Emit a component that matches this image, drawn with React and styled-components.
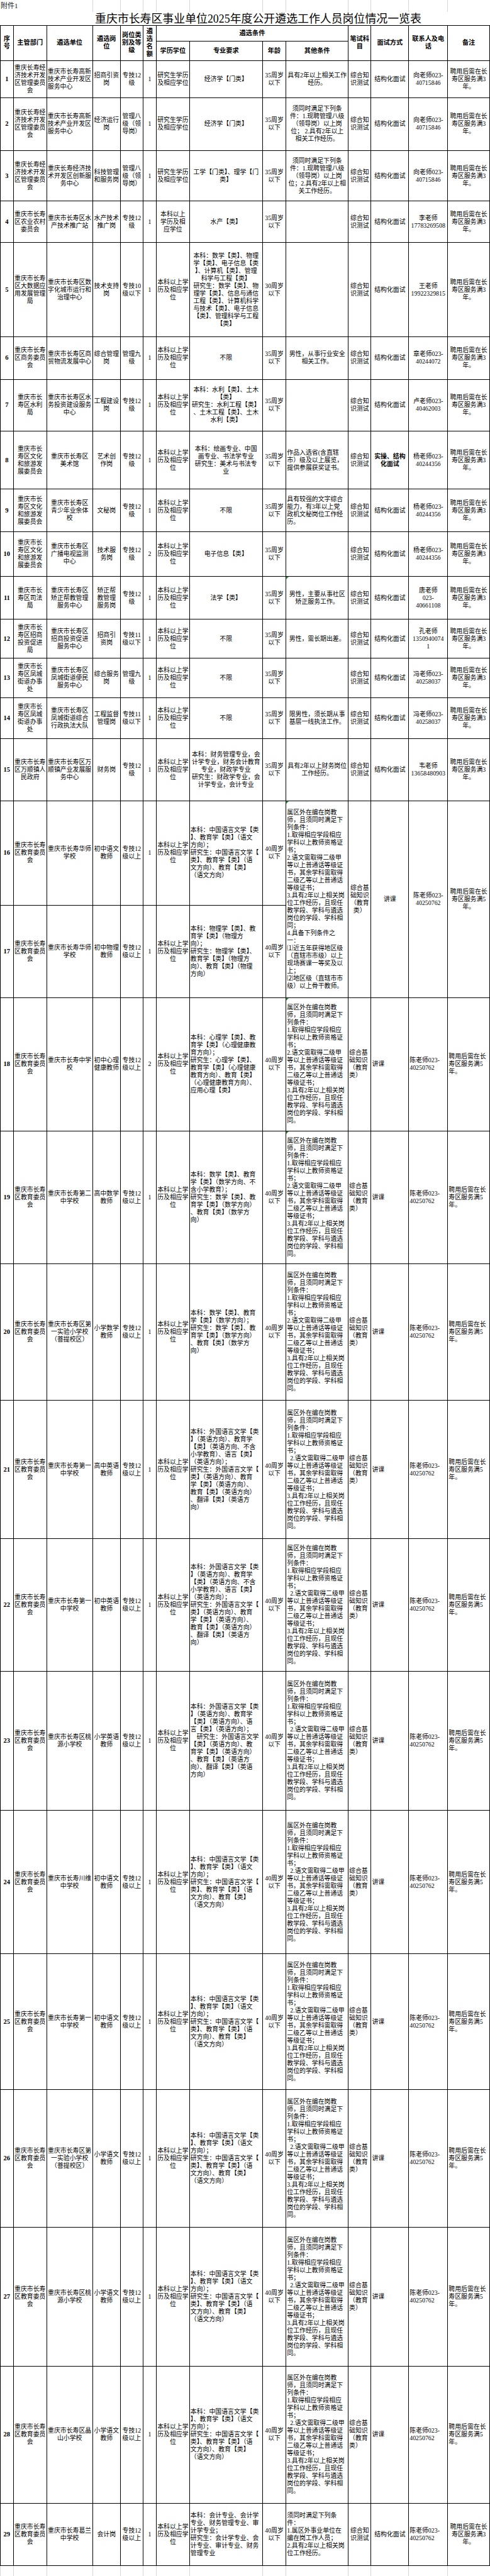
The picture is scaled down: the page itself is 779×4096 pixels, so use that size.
import React from 'react'
import styled, { createGlobalStyle, css } from 'styled-components'

const S = 0.617
// column widths measured on the full-size sheet, then scaled
const COLS = [33.5, 86, 118, 72, 58, 34.4, 85.6, 188, 61, 160, 59, 97, 100.7, 108].map(w => +(w * S).toFixed(1))

const GlobalStyle = createGlobalStyle`
  html, body { margin: 0; padding: 0; background: #fff; }
  body {
    font-family: "Liberation Serif", "Noto Sans CJK SC", serif;
    color: #000;
  }
`

const Page = styled.div`
  width: 779px;
`

const GridStrip = styled.div`
  display: flex;
  height: ${p => p.$h}px;
`

const GridCell = styled.div`
  flex: 0 0 ${p => p.$w}px;
  box-sizing: border-box;
  border-left: ${p => (p.$line ? '1px solid #d6d6d6' : 'none')};
  font-size: 11px;
  line-height: ${p => p.$h}px;
  padding-left: 1px;
  white-space: nowrap;
  color: #222;
`

const TitleBar = styled.div`
  height: 21px;
  padding-left: 151px;
  font-size: 17.9px;
  line-height: 23px;
  white-space: nowrap;
`

const Table = styled.table`
  border-collapse: collapse;
  table-layout: fixed;
  width: ${COLS.reduce((a, b) => a + b, 0)}px;
`

const Col = styled.col`
  width: ${p => p.$w}px;
`

const Row = styled.tr`
  height: ${p => p.$h}px;
`

const Th = styled.th`
  border: 1px solid #000;
  padding: 0 1px;
  font-size: 10.2px;
  line-height: 12px;
  font-weight: 700;
  text-align: center;
  vertical-align: middle;
  white-space: pre-wrap;
`

const Cell = styled.td`
  border: 1px solid #000;
  padding: 0 1px;
  font-size: 9.9px;
  line-height: 12px;
  font-weight: ${p => (p.$bold ? 700 : 400)};
  text-align: ${p => (p.$left ? 'left' : 'center')};
  vertical-align: middle;
  white-space: pre-wrap;
  position: relative;
  overflow: hidden;
  ${p => p.$flag && css`
    &::before {
      content: '';
      position: absolute;
      left: 0;
      top: 0;
      border-top: 4px solid #1e9a3c;
      border-right: 4px solid transparent;
    }
  `}
`

const NumCell = styled(Cell)`
  font-weight: 700;
  font-size: 10.5px;
`

const EDU_R = '研究生学历\n及相应学位'
const EDU_B = '本科以上学\n历及相应学\n位'
const ZK = '综合知\n识测试'
const JG = '结构化面试'
const KFQ = '重庆长寿经\n济技术开发\n区管理委员\n会'
const WL = '重庆市长\n寿区文化\n和旅游发\n展委员会'
const FC = '重庆市长\n寿区凤城\n街道办事\n处'
const ED = '重庆市长寿\n区教育委员\n会'
const G12 = '专技12\n级'
const G12UP = '专技12\n级以上'
const A35 = '35周岁\n以下'
const A40 = '40周岁\n以下'
const XIANG = '向老师023-\n40715846'
const YANG = '杨老师023-\n40244356'
const FENG = '冯老师023-\n40258037'
const CHEN = '陈老师023-\n40250762'
const JY = '综合基\n础知识\n（教育\n类）'
const R3 = '聘用后需在长\n寿区服务满3\n年。'
const R5 = '聘用后需在长\n寿区服务满5\n年。'

const YW = '本科：中国语言文学【类\n】、教育学【类】（语文\n方向）；\n研究生：中国语言文学【\n类】、教育学【类】（语\n文方向）、教育【类】\n（语文方向）'
const EN1 = '本科：外国语言文学【类\n】（英语方向）、教育学\n【类】（英语方向、不含\n小学教育）、语言【类】\n（英语方向）；\n研究生：外国语言文学【\n类】（英语方向）、教育\n学【类】（英语方向）、\n教育【类】（英语方向）\n、翻译【类】（英语方\n向）'
const EN2 = '本科：外国语言文学【类\n】（英语方向）、教育学\n【类】（英语方向）、语\n言【类】（英语方向）；\n\u3000研究生：外国语言文学\n【类】（英语方向）、教\n育学【类】（英语方向）\n、教育【类】（英语方\n向）、翻译【类】（英语\n方向）'

const teacherOther = indent =>
  '属区外在编在岗教\n师，且须同时满足下\n列条件：\n1.取得相应学段相应\n学科以上教师资格证\n书；\n' +
  (indent ? '\u00a0\u00a0' : '') +
  '2.语文需取得二级甲\n等以上普通话等级证\n书，其余学科需取得\n二级乙等以上普通话\n等级证书；\n3.具有2年以上相关岗\n位工作经历，且现任\n教学段、学科与遴选\n岗位的学段、学科相\n同。'

const MERGED_OTHER =
  '属区外在编在岗教\n师，且须同时满足下\n列条件：\n1.取得相应学段相应\n学科以上教师资格证\n书；\n2.语文需取得二级甲\n等以上普通话等级证\n书，其余学科需取得\n二级乙等以上普通话\n等级证书；\n3.具有2年以上相关岗\n位工作经历，且现任\n教学段、学科与遴选\n岗位的学段、学科相\n同；\n4.具备下列条件之\n一：\n⑴近五年获得地区级\n（直辖市市级）以上\n现场赛课一等奖及以\n上；\n⑵地区级（直辖市市\n级）以上骨干教师。'

const rows = [
  { h: 96, dept: KFQ, unit: '重庆市长寿高新\n技术产业开发区\n服务中心', unitLeft: true, post: '招商引资\n岗', grade: G12, num: 1, edu: EDU_R, major: '经济学【门类】', age: A35, other: '具有2年以上相关工作\n经历。', contact: XIANG, remark: R3 },
  { h: 136, dept: KFQ, unit: '重庆市长寿高新\n技术产业开发区\n服务中心', unitLeft: true, post: '经济运行\n岗', grade: '管理八\n级（领\n导岗）', num: 1, edu: EDU_R, major: '经济学【门类】', age: A35, other: '须同时满足下列条\n件：1.现聘管理八级\n（领导岗）以上岗\n位； 2.具有2年以上\n相关工作经历。', contact: XIANG, remark: R3 },
  { h: 131, dept: KFQ, unit: '重庆长寿经济技\n术开发区创新服\n务中心', post: '科技管理\n和服务岗', grade: '管理八\n级（领\n导岗）', num: 1, edu: EDU_R, major: '工学【门类】、理学【门\n类】', age: A35, other: '须同时满足下列条\n件：1.现聘管理八级\n（领导岗）以上岗\n位；2.具有2年以上相\n关工作经历。', contact: XIANG, remark: R3 },
  { h: 107, dept: '重庆市长寿\n区农业农村\n委员会', unit: '重庆市长寿区水\n产技术推广站', post: '水产技术\n推广岗', grade: G12, num: 1, edu: '本科以上\n学历及相\n应学位', major: '水产【类】', age: A35, other: '', contact: '李老师\n17783269508', remark: R3 },
  { h: 242, dept: '重庆市长寿\n区大数据应\n用发展管理\n局', unit: '重庆市长寿区数\n字化城市运行和\n治理中心', post: '技术支持\n岗', grade: '专技10\n级以下', num: 1, edu: EDU_B, major: '本科：数学【类】、物理\n学【类】、电子信息【类\n】、计算机【类】、管理\n科学与工程【类】\n研究生：数学【类】、物\n理学【类】、信息与通信\n工程【类】、计算机科学\n与技术【类】、电子信息\n【类】、管理科学与工程\n【类】', age: '30周岁\n以下', other: '', contact: '王老师\n19922329815', remark: R3 },
  { h: 110, dept: '重庆市长寿\n区商务委员\n会', unit: '重庆市长寿区商\n贸物流发展中心', post: '综合管理\n岗', grade: '管理九\n级', num: 1, edu: EDU_B, major: '不限', age: A35, other: '男性，从事行业安全\n相关工作。', contact: '章老师023-\n40244072', remark: R3 },
  { h: 134, dept: '重庆市长\n寿区水利\n局', unit: '重庆市长寿区水\n务投资建设服务\n中心', post: '工程建设\n岗', grade: G12, num: 1, edu: EDU_B, major: '本科：水利【类】、土木\n【类】\n研究生：水利工程【类】\n、土木工程【类】、土木\n水利【类】', age: A35, other: '', contact: '卢老师023-\n40462003', remark: R3 },
  { h: 149, dept: WL, unit: '重庆市长寿区\n美术馆', post: '艺术创\n作岗', grade: G12, num: 1, edu: EDU_B, major: '本科：绘画专业、中国\n画专业、书法学专业\n研究生：美术与书法专\n业', age: A35, other: '作品入选省(含直辖\n市）级及以上展览，\n提供参展获奖证书。', otherLeft: true, interview: '实操、结构\n化面试', bold: true, contact: YANG, remark: R3 },
  { h: 110, dept: WL, unit: '重庆市长寿区\n青少年业余体\n校', post: '文秘岗', grade: G12, num: 1, edu: EDU_B, major: '不限', age: A35, other: '具有较强的文字综合\n能力，有3年以上党\n政机文秘岗位工作经\n历。', otherLeft: true, contact: YANG, remark: R3 },
  { h: 115, dept: WL, unit: '重庆市长寿区\n广播电视监测\n中心', post: '技术服\n务岗', grade: G12, num: 2, edu: EDU_B, major: '电子信息【类】', age: A35, other: '', contact: YANG, remark: R3 },
  { h: 110, dept: '重庆市长\n寿区司法\n局', unit: '重庆市长寿区\n矫正帮教管理\n服务中心', post: '矫正帮\n教管理\n服务岗', grade: G12, num: 1, edu: EDU_B, major: '法学【类】', age: A35, other: '男性，主要从事社区\n矫正服务工作。', flag: true, contact: '唐老师\n023-\n40661108', remark: R3 },
  { h: 101, dept: '重庆市长\n寿区招商\n投资促进\n局', unit: '重庆市长寿区\n招商投资促进\n服务中心', post: '招商引\n资岗', grade: '专技11\n级以下', num: 1, edu: EDU_B, major: '不限', age: A35, other: '男性，需长期出差。', contact: '孔老师\n1350940074\n1', remark: R3 },
  { h: 101, dept: FC, unit: '重庆市长寿区\n凤城街道便民\n服务中心', post: '综合服务\n岗', grade: '管理九\n级', num: 1, edu: EDU_B, major: '不限', age: A35, other: '', contact: FENG, remark: R3 },
  { h: 106, dept: FC, unit: '重庆市长寿区\n凤城街道综合\n行政执法大队', post: '工程监督\n管理岗', grade: '专技11\n级以下', num: 1, edu: EDU_B, major: '不限', age: A35, other: '限男性，须长期从事\n基层一线执法工作。', contact: FENG, remark: R3 },
  { h: 160, dept: '重庆市长寿\n区万顺镇人\n民政府', unit: '重庆市长寿区万\n顺镇产业发展服\n务中心', post: '财务岗', grade: G12, num: 1, edu: EDU_B, major: '本科：财务管理专业，会\n计学专业，财务会计教育\n专业，财政学专业\n研究生：财政学专业，会\n计学专业，会计专业', age: A35, other: '具有2年以上财务岗位\n工作经历。', contact: '韦老师\n13658480903', remark: R3 },
  { h: 270, merge: 'start', dept: ED, unit: '重庆市长寿华师\n学校', post: '初中语文\n教师', grade: G12UP, num: 1, edu: EDU_B, major: YW, majorLeft: true, age: A40, other: MERGED_OTHER, otherLeft: true, flag: true, exam: JY, interview: '讲课', contact: CHEN, remark: R5 },
  { h: 238, merge: 'skip', dept: ED, unit: '重庆市长寿华师\n学校', post: '初中物理\n教师', grade: G12UP, num: 1, edu: EDU_B, major: '本科：物理学【类】、教\n育学【类】（物理方\n向）；\n研究生：物理学【类】、\n教育学【类】（物理方\n向）、教育【类】（物理\n方向）', majorLeft: true, age: A40 },
  { h: 343, teach: true, flag: true, dept: ED, unit: '重庆市长寿中学\n校', post: '初中心理\n健康教师', grade: G12UP, num: 2, edu: EDU_B, major: '本科：心理学【类】、教\n育学【类】（心理健康教\n育方向）；\n研究生：心理学【类】、\n教育学【类】（心理健康\n教育方向）、教育【类】\n（心理健康教育方向）、\n应用心理【类】', other: teacherOther(false) },
  { h: 343, teach: true, flag: true, dept: ED, unit: '重庆市长寿第二\n中学校', post: '高中数学\n教师', grade: G12UP, num: 1, edu: EDU_B, major: '本科：数学【类】、教育\n学【类】（数学方向、不\n含小学教育）；\n研究生：数学【类】、教\n育学【类】（数学方向）\n、教育【类】（数学方\n向）', other: teacherOther(false) },
  { h: 352, teach: true, dept: ED, unit: '重庆市长寿区第\n一实验小学校\n（菩提校区）', post: '小学数学\n教师', grade: G12UP, num: 1, edu: EDU_B, major: '本科：数学【类】、教育\n学【类】（数学方向）；\n研究生：数学【类】、教\n育学【类】（数学方向）\n、教育【类】（数学方\n向）', other: teacherOther(false) },
  { h: 356, teach: true, dept: ED, unit: '重庆市长寿第一\n中学校', post: '高中英语\n教师', grade: G12UP, num: 1, edu: EDU_B, major: EN1, other: teacherOther(true) },
  { h: 342, teach: true, dept: ED, unit: '重庆市长寿第一\n中学校', post: '初中英语\n教师', grade: G12UP, num: 1, edu: EDU_B, major: EN1, other: teacherOther(true) },
  { h: 358, teach: true, dept: ED, unit: '重庆市长寿区桃\n源小学校', post: '小学英语\n教师', grade: G12UP, num: 1, edu: EDU_B, major: EN2, other: teacherOther(true) },
  { h: 370, teach: true, dept: ED, unit: '重庆市长寿川维\n中学校', post: '初中语文\n教师', grade: G12UP, num: 1, edu: EDU_B, major: YW, other: teacherOther(true) },
  { h: 350, teach: true, dept: ED, unit: '重庆市长寿第一\n中学校', post: '初中语文\n教师', grade: G12UP, num: 1, edu: EDU_B, major: YW, other: teacherOther(true) },
  { h: 355, teach: true, dept: ED, unit: '重庆市长寿区第\n一实验小学校\n（菩提校区）', post: '小学语文\n教师', grade: G12UP, num: 1, edu: EDU_B, major: YW, other: teacherOther(true) },
  { h: 358, teach: true, dept: ED, unit: '重庆市长寿区桃\n源小学校', post: '小学语文\n教师', grade: G12UP, num: 1, edu: EDU_B, major: YW, other: teacherOther(true) },
  { h: 353, teach: true, dept: ED, unit: '重庆市长寿区晶\n山小学校', post: '小学语文\n教师', grade: G12UP, num: 1, edu: EDU_B, major: YW, other: teacherOther(true) },
  { h: 161, dept: ED, unit: '重庆市长寿葛兰\n中学校', post: '会计岗', grade: G12UP, num: 1, edu: EDU_B, major: '本科：会计专业、会计学\n专业、财务管理专业、审\n计学专业；\n研究生：会计学专业、会\n计专业、审计专业、财务\n管理专业', majorLeft: true, age: A40, other: '须同时满足下列条\n件：\n1.属区外事业单位在\n编在岗工作人员；\n2.具有2年以上相关岗\n位工作经历。', otherLeft: true, contactLeft: true, remark: R3 },
]

function BodyRow({ r, n }) {
  const t = r.teach
  const span = r.merge === 'start' ? 2 : 1
  return (
    <Row $h={+(r.h * S).toFixed(1)}>
      <NumCell>{n}</NumCell>
      <Cell>{r.dept}</Cell>
      <Cell $left={r.unitLeft}>{r.unit}</Cell>
      <Cell>{r.post}</Cell>
      <Cell>{r.grade}</Cell>
      <Cell>{r.num}</Cell>
      <Cell>{r.edu}</Cell>
      <Cell $left={t || r.majorLeft}>{r.major}</Cell>
      <Cell>{r.age || A40}</Cell>
      {r.merge !== 'skip' && (
        <>
          <Cell $left={t || r.otherLeft} $flag={r.flag} rowSpan={span}>{r.other}</Cell>
          <Cell $left={t} rowSpan={span}>{r.exam || (t ? JY : ZK)}</Cell>
          <Cell $left={t} $bold={r.bold} rowSpan={span}>{r.interview || (t ? '讲课' : JG)}</Cell>
          <Cell $left={t || r.contactLeft} rowSpan={span}>{r.contact || CHEN}</Cell>
          <Cell $left={t} rowSpan={span}>{r.remark || R5}</Cell>
        </>
      )}
    </Row>
  )
}

export default function App() {
  const stripCols = [COLS[0] + COLS[1] + COLS[2], ...COLS.slice(3)]
  return (
    <Page>
      <GlobalStyle />
      <GridStrip $h={19}>
        {stripCols.map((w, i) => (
          <GridCell key={i} $w={w} $h={19} $line={i > 0}>{i === 0 ? '附件1' : ''}</GridCell>
        ))}
      </GridStrip>
      <TitleBar>重庆市长寿区事业单位2025年度公开遴选工作人员岗位情况一览表</TitleBar>
      <Table>
        <colgroup>
          {COLS.map((w, i) => <Col key={i} $w={w} />)}
        </colgroup>
        <thead>
          <Row $h={24.7}>
            <Th rowSpan={2}>{'序\n号'}</Th>
            <Th rowSpan={2}>主管部门</Th>
            <Th rowSpan={2}>遴选单位</Th>
            <Th rowSpan={2}>{'遴选岗\n位'}</Th>
            <Th rowSpan={2}>{'岗位类\n别及等\n级'}</Th>
            <Th rowSpan={2}>{'遴\n选\n名\n额'}</Th>
            <Th colSpan={4}>遴选条件</Th>
            <Th rowSpan={2}>{'笔试科\n目'}</Th>
            <Th rowSpan={2}>面试方式</Th>
            <Th rowSpan={2}>{'联系人及电\n话'}</Th>
            <Th rowSpan={2}>备注</Th>
          </Row>
          <Row $h={30.9}>
            <Th>学历学位</Th>
            <Th>专业要求</Th>
            <Th>年龄</Th>
            <Th>其他条件</Th>
          </Row>
        </thead>
        <tbody>
          {rows.map((r, i) => <BodyRow key={i} r={r} n={i + 1} />)}
        </tbody>
      </Table>
      <GridStrip $h={16}>
        {COLS.map((w, i) => (
          <GridCell key={i} $w={w} $h={16} $line />
        ))}
      </GridStrip>
    </Page>
  )
}
